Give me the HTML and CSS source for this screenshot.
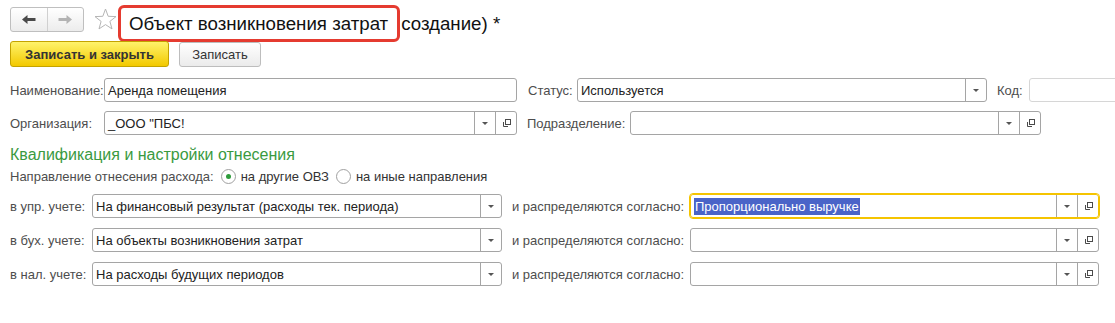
FILE: index.html
```html
<!DOCTYPE html>
<html lang="ru">
<head>
  <meta charset="UTF-8" />
  <title>Объект возникновения затрат (создание)</title>
  <link rel="stylesheet" href="styles.css">
</head>
<body>

  <div class="header">
    <div class="nav">
      <button class="nav-btn">
        <svg width="14" height="9" viewBox="0 0 14 9"><path d="M0 4.5 L5.5 0 V3 H13.5 V6 H5.5 V9 Z" fill="#4a4a4a"/></svg>
      </button>
      <button class="nav-btn">
        <svg width="14" height="9" viewBox="0 0 14 9"><path d="M14 4.5 L8.5 0 V3 H0.5 V6 H8.5 V9 Z" fill="#b3b3b3"/></svg>
      </button>
    </div>
    <svg class="star" width="23" height="22" viewBox="0 0 23 22">
      <path d="M11.5 1 L14.2 8.3 L22 8.6 L15.9 13.4 L18 20.9 L11.5 16.6 L5 20.9 L7.1 13.4 L1 8.6 L8.8 8.3 Z" fill="none" stroke="#b5b5b5" stroke-width="1"/>
    </svg>
    <h1 class="title"><span class="mark">Объект возникновения затрат</span><span class="rest">создание) *</span></h1>
  </div>

  <div class="toolbar">
    <button class="btn btn-main">Записать и закрыть</button>
    <button class="btn btn-plain">Записать</button>
  </div>

  <div class="row row-first">
    <span class="lbl lbl-main">Наименование:</span>
    <div class="field w-name"><span class="val">Аренда помещения</span></div>
    <span class="lbl lbl-status">Статус:</span>
    <div class="field w-status">
      <span class="val">Используется</span>
      <span class="drop"><i class="arrow"></i></span>
    </div>
    <span class="lbl lbl-code">Код:</span>
    <div class="field field-light w-code"></div>
  </div>

  <div class="row row-second">
    <span class="lbl lbl-main">Организация:</span>
    <div class="field w-name">
      <span class="val">_ООО "ПБС!</span>
      <span class="drop"><i class="arrow"></i></span>
      <span class="open"><svg width="11" height="11" viewBox="0 0 11 11"><rect x="4.5" y="1.5" width="5" height="5" fill="none" stroke="#4a4a4a"/><path d="M2.5 4 V8.5 H7" fill="none" stroke="#4a4a4a"/></svg></span>
    </div>
    <span class="lbl lbl-dept">Подразделение:</span>
    <div class="field w-dept">
      <span class="val"></span>
      <span class="drop"><i class="arrow"></i></span>
      <span class="open"><svg width="11" height="11" viewBox="0 0 11 11"><rect x="4.5" y="1.5" width="5" height="5" fill="none" stroke="#4a4a4a"/><path d="M2.5 4 V8.5 H7" fill="none" stroke="#4a4a4a"/></svg></span>
    </div>
  </div>

  <h2 class="group-title">Квалификация и настройки отнесения</h2>

  <div class="radio-row">
    <span class="lbl">Направление отнесения расхода:</span>
    <span class="radio checked"></span>
    <span class="radio-text">на другие ОВЗ</span>
    <span class="radio"></span>
    <span class="radio-text">на иные направления</span>
  </div>

  <div class="rules">
    <div class="row">
      <span class="lbl lbl-acc">в упр. учете:</span>
      <div class="field w-kind">
        <span class="val">На финансовый результат (расходы тек. периода)</span>
        <span class="drop"><i class="arrow"></i></span>
      </div>
      <span class="lbl lbl-by">и распределяются согласно:</span>
      <div class="field w-base focused">
        <span class="val"><span class="selected">Пропорционально выручке</span></span>
        <span class="drop"><i class="arrow"></i></span>
        <span class="open"><svg width="11" height="11" viewBox="0 0 11 11"><rect x="4.5" y="1.5" width="5" height="5" fill="none" stroke="#4a4a4a"/><path d="M2.5 4 V8.5 H7" fill="none" stroke="#4a4a4a"/></svg></span>
      </div>
    </div>
    <div class="row">
      <span class="lbl lbl-acc">в бух. учете:</span>
      <div class="field w-kind">
        <span class="val">На объекты возникновения затрат</span>
        <span class="drop"><i class="arrow"></i></span>
      </div>
      <span class="lbl lbl-by">и распределяются согласно:</span>
      <div class="field w-base">
        <span class="val"></span>
        <span class="drop"><i class="arrow"></i></span>
        <span class="open"><svg width="11" height="11" viewBox="0 0 11 11"><rect x="4.5" y="1.5" width="5" height="5" fill="none" stroke="#4a4a4a"/><path d="M2.5 4 V8.5 H7" fill="none" stroke="#4a4a4a"/></svg></span>
      </div>
    </div>
    <div class="row">
      <span class="lbl lbl-acc">в нал. учете:</span>
      <div class="field w-kind">
        <span class="val">На расходы будущих периодов</span>
        <span class="drop"><i class="arrow"></i></span>
      </div>
      <span class="lbl lbl-by">и распределяются согласно:</span>
      <div class="field w-base">
        <span class="val"></span>
        <span class="drop"><i class="arrow"></i></span>
        <span class="open"><svg width="11" height="11" viewBox="0 0 11 11"><rect x="4.5" y="1.5" width="5" height="5" fill="none" stroke="#4a4a4a"/><path d="M2.5 4 V8.5 H7" fill="none" stroke="#4a4a4a"/></svg></span>
      </div>
    </div>
  </div>

</body>
</html>
```

FILE: styles.css
```css
* {
  box-sizing: border-box;
}

body {
  margin: 0;
  background: #fff;
  font-family: 'Liberation Sans', Arial, sans-serif;
  font-size: 13px;
  color: #4d4d4d;
  overflow: hidden;
}

/* header */

.header {
  display: flex;
  align-items: flex-start;
  height: 41px;
  padding-left: 10px;
}

.nav {
  display: flex;
  margin-top: 7px;
  width: 74px;
  height: 25px;
  border: 1px solid #bfbfbf;
  border-radius: 3px;
  background: linear-gradient(#fff, #ececec);
}

.nav-btn {
  flex: 1;
  display: flex;
  align-items: center;
  justify-content: center;
  padding: 0;
  border: none;
  background: none;
}

.nav-btn + .nav-btn {
  border-left: 1px solid #d0d0d0;
}

.star {
  margin: 8px 0 0 10px;
}

.title {
  display: flex;
  align-items: center;
  margin: 5px 0 0 1px;
  font-size: 18.7px;
  font-weight: normal;
  color: #111;
  white-space: nowrap;
}

.mark {
  display: flex;
  align-items: center;
  height: 37px;
  padding: 0 9px 0 8px;
  border: 3px solid #e53b30;
  border-radius: 6px;
}

.rest {
  margin-left: 1px;
}

/* buttons */

.toolbar {
  display: flex;
  align-items: flex-start;
  gap: 10px;
  padding-left: 10px;
  height: 26px;
}

.btn {
  font-family: inherit;
  font-size: 13px;
  color: #333;
  border-radius: 3px;
  padding: 0;
}

.btn-main {
  width: 159px;
  height: 26px;
  font-weight: bold;
  border: 1px solid #c4a300;
  background: linear-gradient(#fff36b, #f3c900);
}

.btn-plain {
  width: 82px;
  height: 25px;
  margin-top: 1px;
  border: 1px solid #bdbdbd;
  background: linear-gradient(#fff, #ebebeb);
}

/* form */

.row {
  display: flex;
  align-items: center;
  height: 24px;
  padding-left: 10px;
}

.row-first {
  margin-top: 11px;
}

.row-second {
  margin-top: 9px;
}

.lbl {
  flex-shrink: 0;
  white-space: nowrap;
}

.lbl-main { width: 94px; }
.lbl-status { width: 49px; margin-left: 11px; }
.lbl-code { width: 32px; margin-left: 10px; }
.lbl-dept { width: 103px; margin-left: 10px; }
.lbl-acc { width: 82px; }
.lbl-by { width: 178px; margin-left: 10px; }

.field {
  display: flex;
  flex-shrink: 0;
  height: 24px;
  border: 1px solid #a5a5a5;
  border-radius: 3px;
  background: #fff;
  color: #222;
}

.field-light {
  border-color: #d6d6d6;
}

.w-name { width: 413px; }
.w-status { width: 410px; }
.w-code { width: 120px; }
.w-dept { width: 411px; }
.w-kind { width: 410px; }
.w-base { width: 409px; }

.val {
  flex: 1;
  display: flex;
  align-items: center;
  padding-left: 3px;
  white-space: nowrap;
  overflow: hidden;
}

.drop, .open {
  display: flex;
  align-items: center;
  justify-content: center;
  width: 21px;
  border-left: 1px solid #a5a5a5;
}

.arrow {
  width: 0;
  height: 0;
  border-left: 3px solid transparent;
  border-right: 3px solid transparent;
  border-top: 3px solid #555;
}

.focused {
  border-color: #f5c400;
  outline: 1px solid #f5c400;
}

.selected {
  background: #4a64c8;
  color: #fff;
  line-height: 17px;
  padding: 0 1px;
}

/* group */

.group-title {
  margin: 10px 0 0 10px;
  font-size: 16px;
  line-height: 20px;
  font-weight: normal;
  color: #3a9a3f;
}

.radio-row {
  display: flex;
  align-items: center;
  height: 18px;
  margin-top: 2px;
  padding-left: 10px;
}

.radio {
  display: flex;
  align-items: center;
  justify-content: center;
  width: 15px;
  height: 15px;
  margin-left: 7px;
  border: 1px solid #a0a0a0;
  border-radius: 50%;
}

.radio.checked::after {
  content: "";
  width: 5px;
  height: 5px;
  border-radius: 50%;
  background: #2e9c3b;
}

.radio-text {
  margin-left: 5px;
  color: #333;
}

.rules {
  display: flex;
  flex-direction: column;
  gap: 10px;
  margin-top: 9px;
}
```
